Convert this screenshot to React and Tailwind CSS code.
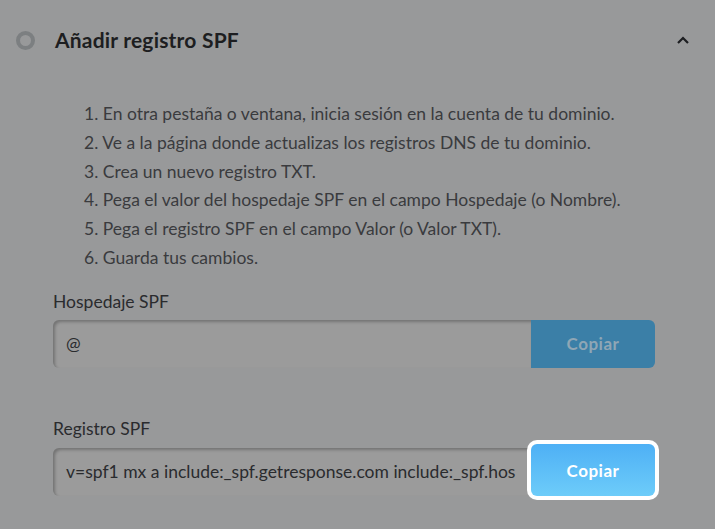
import React from "react";

const steps = [
  "En otra pestaña o ventana, inicia sesión en la cuenta de tu dominio.",
  "Ve a la página donde actualizas los registros DNS de tu dominio.",
  "Crea un nuevo registro TXT.",
  "Pega el valor del hospedaje SPF en el campo Hospedaje (o Nombre).",
  "Pega el registro SPF en el campo Valor (o Valor TXT).",
  "Guarda tus cambios.",
];

const App = () => {
  return (
    <div
      className="w-[715px] h-[529px] overflow-hidden bg-[#98999a] text-[#2f3033]"
      style={{ fontFamily: "Lato, 'Noto Sans', sans-serif" }}
    >
      {/* Header */}
      <div className="flex items-center h-[80px] pl-[16px] pr-[24px]">
        <div className="w-[19px] h-[19px] rounded-full border-[4px] border-[#7c7f81]" />
        <h2 className="ml-[20px] text-[21px] font-bold text-[#1d1e21] tracking-[0.2px]">
          Añadir registro SPF
        </h2>
        <div className="ml-auto">
          <svg width="16" height="16" viewBox="0 0 16 16" fill="none">
            <path d="M3 11 L8 6 L13 11" stroke="#1d1e21" strokeWidth="2.2" />
          </svg>
        </div>
      </div>

      {/* Steps */}
      <ol className="pl-[84px] pt-[20px] text-[17.5px] leading-[28.8px] text-[#3a3b3e]">
        {steps.map((s, i) => (
          <li key={i}>
            {i + 1}. {s}
          </li>
        ))}
      </ol>

      {/* Hospedaje */}
      <div className="pl-[53px] pr-[60px] mt-[16px]">
        <div className="text-[17.5px] text-[#2a2b2e] mb-[5px]">Hospedaje SPF</div>
        <div className="flex h-[48px]">
          <div className="flex-1 flex items-center pl-[13px] bg-[#9b9b9b] rounded-l-[6px] shadow-[inset_2px_2px_3px_rgba(0,0,0,0.25)] text-[17.5px] text-[#2a2b2e]">
            @
          </div>
          <button className="w-[124px] bg-[#3b7fa7] rounded-r-[6px] text-[17px] font-bold text-[#8fa6b5] tracking-[0.5px]">
            Copiar
          </button>
        </div>
      </div>

      {/* Registro */}
      <div className="pl-[53px] pr-[60px] mt-[48px]">
        <div className="text-[17.5px] text-[#2a2b2e] mb-[6px]">Registro SPF</div>
        <div className="flex h-[48px]">
          <div className="flex-1 min-w-0 flex items-center pl-[13px] bg-[#9b9b9b] rounded-l-[6px] shadow-[inset_2px_2px_3px_rgba(0,0,0,0.25)] text-[17.5px] text-[#2a2b2e] overflow-hidden whitespace-nowrap">
            v=spf1 mx a include:_spf.getresponse.com include:_spf.hos
          </div>
          <div className="w-[132px] shrink-0 -ml-[4px] -mr-[4px] -mt-[8px] -mb-[4px] p-[4px] rounded-[10px] bg-white">
            <button className="w-full h-full rounded-[6px] bg-gradient-to-b from-[#4eb0f5] to-[#6dccf9] text-[17px] font-bold text-white tracking-[0.5px]">
              Copiar
            </button>
          </div>
        </div>
      </div>
    </div>
  );
};

export default App;
